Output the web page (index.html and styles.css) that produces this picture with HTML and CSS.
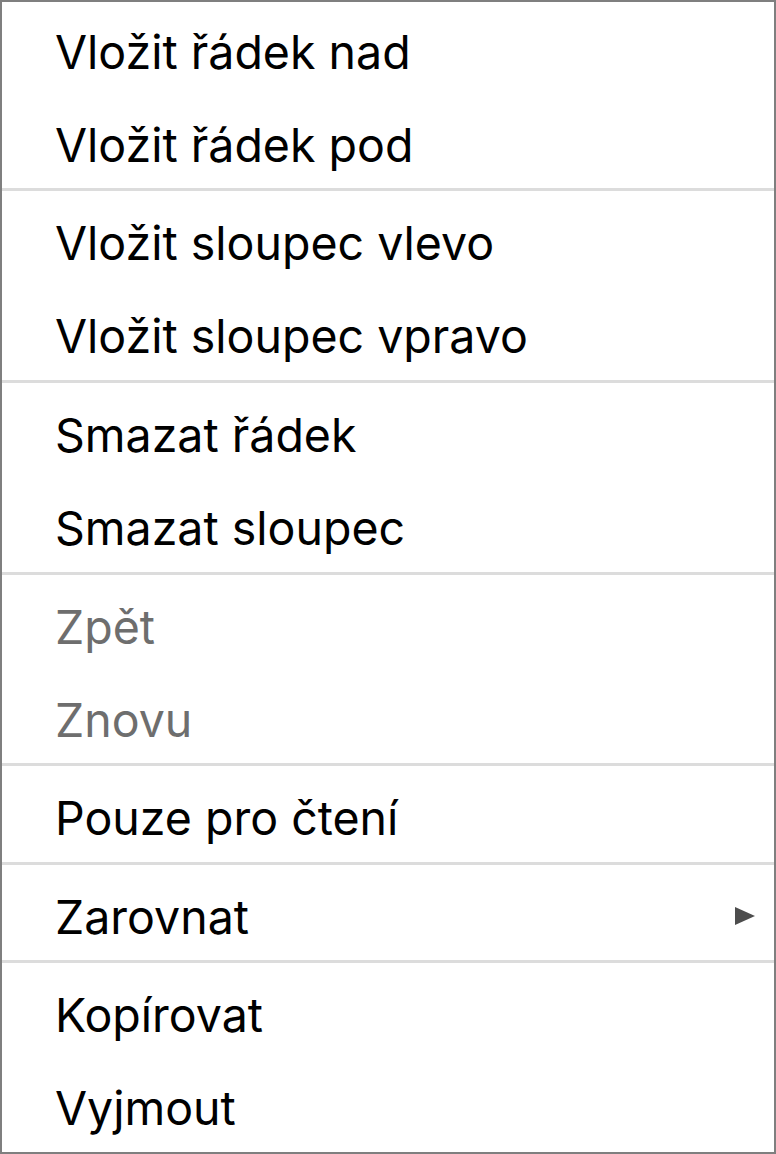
FILE: index.html
```html
<!DOCTYPE html>
<html lang="cs">
<head>
<meta charset="utf-8">
<title>Kontextové menu</title>
<link rel="stylesheet" href="styles.css">
</head>
<body>
<div class="menu">
  <div class="group">
    <div class="item">Vložit řádek nad</div>
    <div class="item">Vložit řádek pod</div>
  </div>
  <div class="sep"></div>
  <div class="group">
    <div class="item">Vložit sloupec vlevo</div>
    <div class="item">Vložit sloupec vpravo</div>
  </div>
  <div class="sep"></div>
  <div class="group">
    <div class="item">Smazat řádek</div>
    <div class="item">Smazat sloupec</div>
  </div>
  <div class="sep"></div>
  <div class="group">
    <div class="item disabled">Zpět</div>
    <div class="item disabled">Znovu</div>
  </div>
  <div class="sep"></div>
  <div class="group">
    <div class="item">Pouze pro čtení</div>
  </div>
  <div class="sep"></div>
  <div class="group">
    <div class="item has-sub">Zarovnat<span class="arrow"></span></div>
  </div>
  <div class="sep"></div>
  <div class="group">
    <div class="item">Kopírovat</div>
    <div class="item">Vyjmout</div>
  </div>
</div>
</body>
</html>
```
FILE: styles.css
```css
html, body {
  margin: 0;
  padding: 0;
  background: #ffffff;
}
.menu {
  box-sizing: border-box;
  width: 776px;
  height: 1154px;
  border: 2px solid #7f7f7f;
  background: #ffffff;
  display: flex;
  flex-direction: column;
  font-family: Inter, "Noto Sans", sans-serif;
  font-size: 46.5px;
  color: #000000;
  overflow: hidden;
}
.group {
  display: flex;
  flex-direction: column;
}
.item {
  height: 93.17px;
  display: flex;
  align-items: center;
  padding: 6px 0 0 53px;
  box-sizing: border-box;
  white-space: nowrap;
}
.item.disabled {
  color: #6e6e6e;
}
.item.has-sub {
  justify-content: space-between;
  padding-right: 19px;
}
.arrow {
  width: 0;
  height: 0;
  margin-top: -2px;
  border-top: 9.5px solid transparent;
  border-bottom: 9.5px solid transparent;
  border-left: 20px solid #4d4d4d;
}
.sep {
  height: 3px;
  margin-bottom: 2.33px;
  background: #dcdcdc;
  flex: none;
}
```
